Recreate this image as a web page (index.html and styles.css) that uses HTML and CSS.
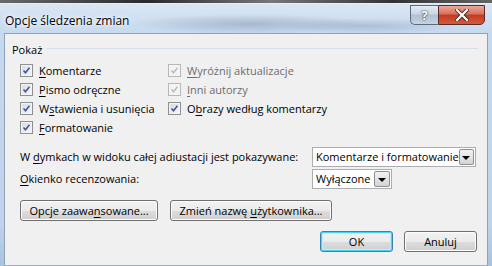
FILE: index.html
```html
<!DOCTYPE html>
<html lang="pl">
<head>
    <meta charset="UTF-8">
    <title>Opcje śledzenia zmian</title>
    <link rel="stylesheet" href="styles.css">
</head>
<body>
    <div class="behind"></div>
    <div class="dlg">
        <div class="caption">
            <span class="caption-title">Opcje śledzenia zmian</span>
            <div class="caption-btns">
                <span class="cap-help">?</span>
                <span class="cap-close">
                    <svg width="14" height="12" viewBox="0 0 14 12">
                        <path d="M2 1 L12 11 M12 1 L2 11" stroke="#3d2a2a" stroke-width="4" stroke-linecap="square"/>
                        <path d="M2 1 L12 11 M12 1 L2 11" stroke="#fff" stroke-width="2.2" stroke-linecap="square"/>
                    </svg>
                </span>
            </div>
        </div>

        <div class="client">
            <div class="grp-head">
                <span>Pokaż</span>
                <span class="grp-line"></span>
            </div>

            <div class="checks">
                <label class="chk"><span class="box"><svg viewBox="0 0 13 13"><path d="M3 6.5 L5.3 9.2 L10 3.3"/></svg></span><span><u>K</u>omentarze</span></label>
                <label class="chk off"><span class="box"><svg viewBox="0 0 13 13"><path d="M3 6.5 L5.3 9.2 L10 3.3"/></svg></span><span><u>W</u>yróżnij aktualizacje</span></label>
                <label class="chk"><span class="box"><svg viewBox="0 0 13 13"><path d="M3 6.5 L5.3 9.2 L10 3.3"/></svg></span><span><u>P</u>ismo odręczne</span></label>
                <label class="chk off"><span class="box"><svg viewBox="0 0 13 13"><path d="M3 6.5 L5.3 9.2 L10 3.3"/></svg></span><span><u>I</u>nni autorzy</span></label>
                <label class="chk"><span class="box"><svg viewBox="0 0 13 13"><path d="M3 6.5 L5.3 9.2 L10 3.3"/></svg></span><span>W<u>s</u>tawienia i usunięcia</span></label>
                <label class="chk"><span class="box"><svg viewBox="0 0 13 13"><path d="M3 6.5 L5.3 9.2 L10 3.3"/></svg></span><span>O<u>b</u>razy według komentarzy</span></label>
                <label class="chk"><span class="box"><svg viewBox="0 0 13 13"><path d="M3 6.5 L5.3 9.2 L10 3.3"/></svg></span><span><u>F</u>ormatowanie</span></label>
            </div>

            <div class="fields">
                <span class="fld-label">W <u>d</u>ymkach w widoku całej adiustacji jest pokazywane:</span>
                <span class="combo combo-wide">
                    <span class="combo-text">Komentarze i formatowanie</span>
                    <span class="combo-btn"><span class="arrow"></span></span>
                </span>
                <span class="fld-label"><u>O</u>kienko recenzowania:</span>
                <span class="combo combo-short">
                    <span class="combo-text">Wyłączone</span>
                    <span class="combo-btn"><span class="arrow"></span></span>
                </span>
            </div>

            <div class="btn-row">
                <button class="btn btn-adv">Opcje zaawa<u>n</u>sowane...</button>
                <button class="btn btn-user">Zmień nazwę <u>u</u>żytkownika...</button>
            </div>

            <div class="btn-row btn-row-end">
                <button class="btn btn-ok">OK</button>
                <button class="btn btn-cancel">Anuluj</button>
            </div>
        </div>
    </div>
</body>
</html>
```

FILE: styles.css
```css
* {
    box-sizing: border-box;
}

body {
    margin: 0;
    width: 492px;
    height: 266px;
    overflow: hidden;
    font-family: "Open Sans", "Noto Sans", sans-serif;
    font-size: 11px;
    line-height: 16px;
    white-space: nowrap;
    color: #000;
    background: #fff;
}

u {
    text-decoration-thickness: 1px;
    text-underline-offset: 2px;
}

.behind {
    height: 3px;
    background: linear-gradient(90deg, #6a6a6a, #2a2a2a 30%, #777 55%, #333 80%, #666);
}

.dlg {
    height: 263px;
    display: flex;
    flex-direction: column;
    background:
        radial-gradient(ellipse 120px 10px at 250px 20px, rgba(70, 90, 120, 0.28), transparent),
        radial-gradient(ellipse 90px 8px at 370px 22px, rgba(70, 90, 120, 0.22), transparent),
        radial-gradient(ellipse 150px 6px at 240px 258px, rgba(60, 80, 110, 0.35), transparent),
        linear-gradient(#d9e6f4, #c6d9ee 30px, #bfd3ea 220px, #a9c2de);
    border-top: 1px solid #e8eef6;
}

.caption {
    height: 29px;
    display: flex;
    justify-content: space-between;
    align-items: flex-start;
}

.caption-title {
    margin: 9px 0 0 5px;
    font-size: 12px;
    text-shadow: 0 0 6px #fff, 0 0 3px #fff;
}

.caption-btns {
    display: flex;
    margin: 1px 7px 0 0;
}

.cap-help {
    width: 28px;
    height: 20px;
    border: 1px solid #5c6a7c;
    border-right: none;
    border-radius: 0 0 0 5px;
    background: linear-gradient(#e3ebf4, #c9d6e5 45%, #b0c0d4 50%, #c5d3e2);
    color: #fff;
    font-weight: bold;
    font-size: 13px;
    line-height: 18px;
    text-align: center;
    text-shadow: 0 0 2px #2a3340, 0 0 1px #2a3340;
}

.cap-close {
    width: 47px;
    height: 20px;
    border: 1px solid #5b2a22;
    border-radius: 0 0 5px 0;
    background: linear-gradient(#e9a899, #d7705c 45%, #c3391f 50%, #d35a3e);
    display: flex;
    align-items: center;
    justify-content: center;
}

.client {
    flex: 1;
    margin: 0 4px;
    background: #f0f0f0;
    border: 1px solid #8ea1b8;
    border-bottom-color: #9db0c6;
}

.grp-head {
    display: flex;
    align-items: center;
    margin: 8px 9px 0 7px;
    height: 16px;
}

.grp-line {
    flex: 1;
    height: 1px;
    margin: 0 0 3px 5px;
    background: #d5dfe5;
}

.checks {
    display: grid;
    grid-template-columns: 148px auto;
    grid-auto-rows: 19px;
    margin: 3px 0 0 15px;
}

.chk {
    display: flex;
    align-items: center;
    gap: 6px;
}

.box {
    width: 13px;
    height: 13px;
    border: 1px solid #8e8f8f;
    background: linear-gradient(135deg, #d6dbe3, #f7f7f7);
    box-shadow: inset 0 0 0 1px #f4f4f4;
}

.box svg {
    display: block;
    width: 11px;
    height: 11px;
}

.box path {
    fill: none;
    stroke: #3f5592;
    stroke-width: 1.8;
}

.chk.off {
    color: #6d6d6d;
}

.chk.off .box {
    border-color: #b8b8b8;
    background: #f4f4f4;
}

.chk.off .box path {
    stroke: #b9bcc2;
}

.fields {
    display: grid;
    grid-template-columns: 292px auto;
    row-gap: 2px;
    align-items: center;
    margin: 10px 0 0 15px;
}

.combo {
    display: flex;
    align-items: center;
    justify-content: space-between;
    height: 20px;
    background: #fff;
    border: 1px solid #abadb3;
    padding: 0 1px 0 3px;
}

.combo-wide {
    width: 164px;
}

.combo-short {
    width: 80px;
}

.combo-btn {
    width: 16px;
    height: 16px;
    border: 1px solid #8f8f8f;
    border-radius: 2px;
    background: linear-gradient(#f2f2f2, #e4e4e4 50%, #d3d3d3);
    display: flex;
    align-items: center;
    justify-content: center;
}

.arrow {
    width: 0;
    height: 0;
    border-left: 4px solid transparent;
    border-right: 4px solid transparent;
    border-top: 4px solid #000;
    margin-top: 1px;
}

.btn-row {
    display: flex;
    gap: 12px;
    margin: 11px 0 0 15px;
}

.btn-row-end {
    justify-content: flex-end;
    margin: 10px 10px 0 0;
    gap: 11px;
}

.btn {
    height: 21px;
    padding: 0;
    font-family: inherit;
    font-size: 11px;
    color: #000;
    border: 1px solid #707070;
    border-radius: 3px;
    background: linear-gradient(#f2f2f2, #ebebeb 50%, #dddddd 51%, #cfcfcf);
    box-shadow: inset 0 0 0 1px #fcfcfc;
}

.btn-adv {
    width: 138px;
}

.btn-user {
    width: 162px;
}

.btn-ok,
.btn-cancel {
    width: 73px;
}

.btn-ok {
    border-color: #3c7fb1;
    box-shadow: inset 0 0 0 1px #48d4f5, inset 0 0 0 2px #c4ecfb;
}
```
